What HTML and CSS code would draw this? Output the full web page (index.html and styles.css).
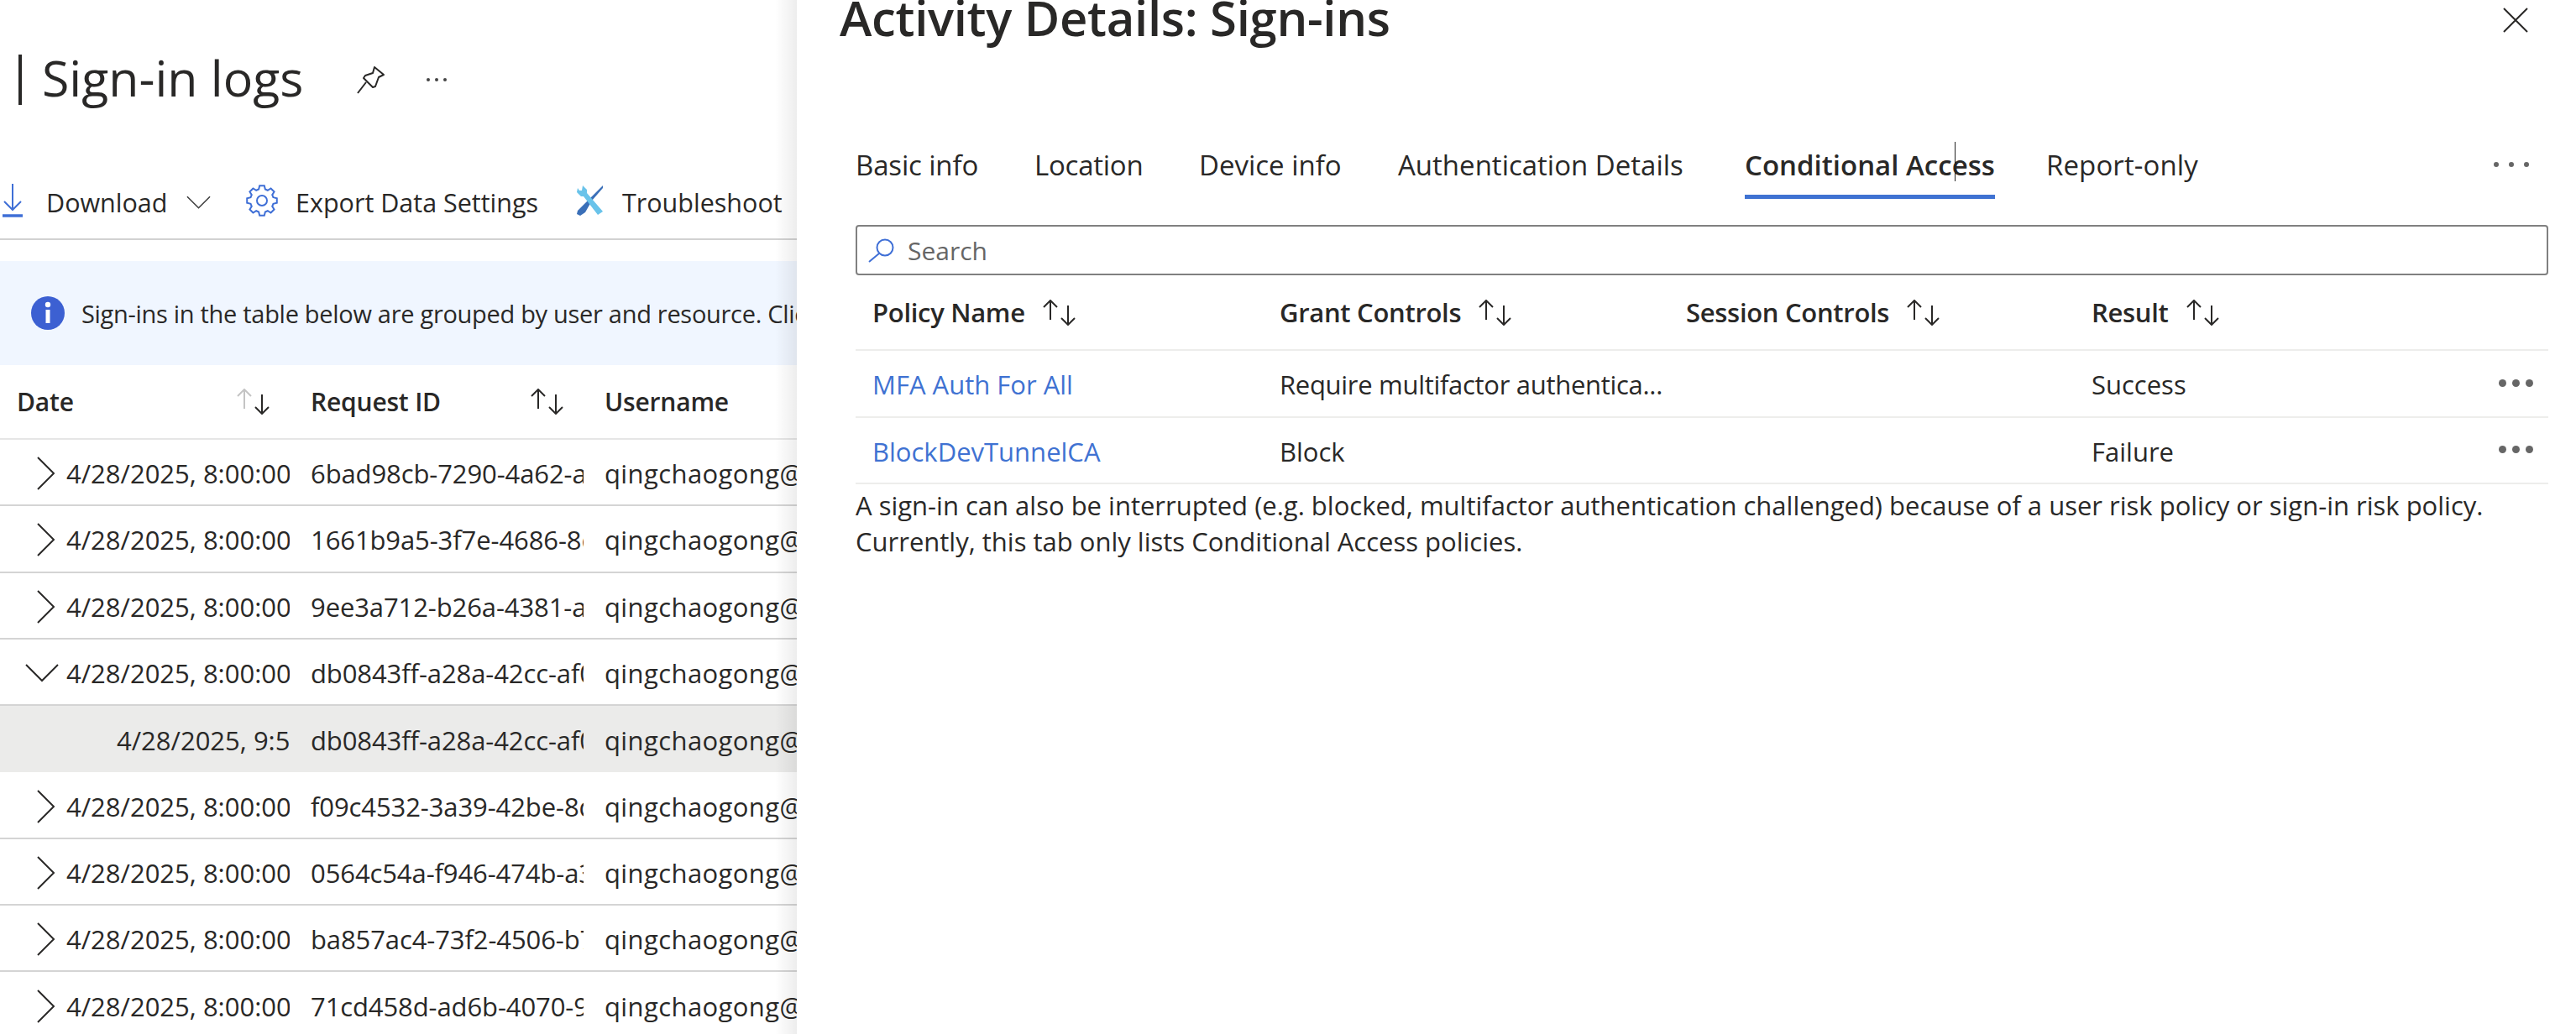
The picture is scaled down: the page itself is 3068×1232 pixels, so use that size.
FILE: index.html
```html
<!DOCTYPE html>
<html lang="en">
<head>
<meta charset="utf-8">
<title>Sign-in logs</title>
<link rel="stylesheet" href="styles.css">
</head>
<body>
<svg class="defs" width="0" height="0" aria-hidden="true">
  <symbol id="sort" viewBox="0 0 41 31"><path d="M10 1V24M2 9L10 1L18 9M31 7V30M23 22L31 30L39 22" fill="none" stroke="currentColor" stroke-width="2"/></symbol>
  <symbol id="sort-date" viewBox="0 0 41 31"><path d="M10 1V24M2 9L10 1L18 9" fill="none" stroke="#c4c4c4" stroke-width="2"/><path d="M31 7V30M23 22L31 30L39 22" fill="none" stroke="#292827" stroke-width="2"/></symbol>
  <symbol id="chev-r" viewBox="0 0 22 40"><path d="M1 1L20 20L1 39" fill="none" stroke="#292827" stroke-width="2"/></symbol>
  <symbol id="chev-d" viewBox="0 0 40 22"><path d="M1 1L20 20L39 1" fill="none" stroke="#292827" stroke-width="2"/></symbol>
</svg>
<div class="page">
  <main class="blade">
    <header class="blade-head">
      <h1 class="blade-title"><span class="title-bar"></span>Sign-in logs</h1>
      <svg class="pin" viewBox="0 0 34 34"><path d="M1 33L11 20M21 2L32 11L26 14L22 25L19 26L8 15L10 12L19 9Z" fill="none" stroke="#292827" stroke-width="2" stroke-linejoin="round"/></svg>
      <span class="head-dots"><i></i><i></i><i></i></span>
    </header>
    <div class="toolbar">
      <svg class="ic-download" viewBox="0 0 24 40"><path d="M12 0V31M2 21L12 31L22 21" fill="none" stroke="#3f6fd6" stroke-width="2"/><path d="M0 38H24" stroke="#3f6fd6" stroke-width="3.5"/></svg>
      <span class="tool-label tl-download">Download</span>
      <svg class="ic-caret" viewBox="0 0 30 16"><path d="M1 1L15 15L29 1" fill="none" stroke="#3c3c3c" stroke-width="1.6"/></svg>
      <svg class="ic-gear" viewBox="0 0 40 40"><path d="M33.46 16.14L37.78 17.18L37.78 22.82L33.46 23.86L32.24 26.79L34.56 30.58L30.58 34.56L26.79 32.24L23.86 33.46L22.82 37.78L17.18 37.78L16.14 33.46L13.21 32.24L9.42 34.56L5.44 30.58L7.76 26.79L6.54 23.86L2.22 22.82L2.22 17.18L6.54 16.14L7.76 13.21L5.44 9.42L9.42 5.44L13.21 7.76L16.14 6.54L17.18 2.22L22.82 2.22L23.86 6.54L26.79 7.76L30.58 5.44L34.56 9.42L32.24 13.21Z" fill="none" stroke="#3f6fd6" stroke-width="2"/><circle cx="20" cy="20" r="6" fill="none" stroke="#3f6fd6" stroke-width="2"/></svg>
      <span class="tool-label tl-export">Export Data Settings</span>
      <svg class="ic-wrench" viewBox="0 0 34 36"><path d="M33 0L3 30L2 34L6 36L12 32L20 18L33 3Z" fill="#3a6fb8"/><path d="M3 3L2 8L7 13L10 13L27 35L33 31L14 9L14 5L9 0L8 6L5 6Z" fill="#69c3ea"/></svg>
      <span class="tool-label tl-trouble">Troubleshoot</span>
    </div>
    <div class="banner">
      <svg class="ic-info" viewBox="0 0 40 40"><circle cx="20" cy="20" r="20" fill="#3c60d2"/><circle cx="20" cy="10" r="3.2" fill="#fff"/><rect x="17.5" y="16" width="5" height="16" fill="#fff"/></svg>
      <span class="banner-text">Sign-ins in the table below are grouped by user and resource. Click on a row to see details.</span>
    </div>
    <div class="log-table">
      <div class="log-row log-head">
        <div class="log-h h-date"><span>Date</span><svg class="sort-ic"><use href="#sort-date"/></svg></div>
        <div class="log-h h-req"><span>Request ID</span><svg class="sort-ic"><use href="#sort"/></svg></div>
        <div class="log-h h-user">Username</div>
      </div>
      <div class="log-row"><div class="c-date"><svg class="chev"><use href="#chev-r"/></svg><span>4/28/2025, 8:00:00</span></div><div class="c-req">6bad98cb-7290-4a62-a1b2</div><div class="c-user">qingchaogong@microsoft</div></div>
      <div class="log-row"><div class="c-date"><svg class="chev"><use href="#chev-r"/></svg><span>4/28/2025, 8:00:00</span></div><div class="c-req">1661b9a5-3f7e-4686-8c1d</div><div class="c-user">qingchaogong@microsoft</div></div>
      <div class="log-row"><div class="c-date"><svg class="chev"><use href="#chev-r"/></svg><span>4/28/2025, 8:00:00</span></div><div class="c-req">9ee3a712-b26a-4381-a0f4</div><div class="c-user">qingchaogong@microsoft</div></div>
      <div class="log-row"><div class="c-date"><svg class="chev-open"><use href="#chev-d"/></svg><span>4/28/2025, 8:00:00</span></div><div class="c-req">db0843ff-a28a-42cc-af01</div><div class="c-user">qingchaogong@microsoft</div></div>
      <div class="log-row sub-row"><div class="c-date c-sub"><span>4/28/2025, 9:5</span></div><div class="c-req">db0843ff-a28a-42cc-af01</div><div class="c-user">qingchaogong@microsoft</div></div>
      <div class="log-row"><div class="c-date"><svg class="chev"><use href="#chev-r"/></svg><span>4/28/2025, 8:00:00</span></div><div class="c-req">f09c4532-3a39-42be-8d21</div><div class="c-user">qingchaogong@microsoft</div></div>
      <div class="log-row"><div class="c-date"><svg class="chev"><use href="#chev-r"/></svg><span>4/28/2025, 8:00:00</span></div><div class="c-req">0564c54a-f946-474b-a3e9</div><div class="c-user">qingchaogong@microsoft</div></div>
      <div class="log-row"><div class="c-date"><svg class="chev"><use href="#chev-r"/></svg><span>4/28/2025, 8:00:00</span></div><div class="c-req">ba857ac4-73f2-4506-b7c2</div><div class="c-user">qingchaogong@microsoft</div></div>
      <div class="log-row"><div class="c-date"><svg class="chev"><use href="#chev-r"/></svg><span>4/28/2025, 8:00:00</span></div><div class="c-req">71cd458d-ad6b-4070-9e11</div><div class="c-user">qingchaogong@microsoft</div></div>
    </div>
  </main>
  <aside class="panel">
    <div class="panel-head">
      <h2 class="panel-title">Activity Details: Sign-ins</h2>
      <svg class="ic-close" viewBox="0 0 30 30"><path d="M1 1L29 29M29 1L1 29" fill="none" stroke="#292827" stroke-width="2"/></svg>
    </div>
    <nav class="tabs">
      <span class="tab t-basic">Basic info</span>
      <span class="tab t-loc">Location</span>
      <span class="tab t-dev">Device info</span>
      <span class="tab t-auth">Authentication Details</span>
      <span class="tab tab-active t-ca">Conditional Access<i class="caret"></i></span>
      <span class="tab t-rep">Report-only</span>
      <span class="tab-dots"><i></i><i></i><i></i></span>
    </nav>
    <div class="search">
      <svg class="ic-search" viewBox="0 0 31 29"><circle cx="20" cy="11" r="9.5" fill="none" stroke="#3f6fd6" stroke-width="2"/><path d="M13 18L1 28" fill="none" stroke="#3f6fd6" stroke-width="2"/></svg>
      <span class="search-text">Search</span>
    </div>
    <div class="ca-table">
      <div class="ca-row ca-head">
        <div class="ca-h"><span>Policy Name</span><svg class="sort-ic"><use href="#sort"/></svg></div>
        <div class="ca-h"><span>Grant Controls</span><svg class="sort-ic"><use href="#sort"/></svg></div>
        <div class="ca-h"><span>Session Controls</span><svg class="sort-ic"><use href="#sort"/></svg></div>
        <div class="ca-h"><span>Result</span><svg class="sort-ic"><use href="#sort"/></svg></div>
      </div>
      <div class="ca-row ca-body">
        <div class="ca-link">MFA Auth For All</div>
        <div class="ca-grant">Require multifactor authentica...</div>
        <div></div>
        <div>Success</div>
        <span class="row-dots"><i></i><i></i><i></i></span>
      </div>
      <div class="ca-row ca-body">
        <div class="ca-link">BlockDevTunnelCA</div>
        <div>Block</div>
        <div></div>
        <div>Failure</div>
        <span class="row-dots"><i></i><i></i><i></i></span>
      </div>
    </div>
    <p class="note">A sign-in can also be interrupted (e.g. blocked, multifactor authentication challenged) because of a user risk policy or sign-in risk policy.<br>Currently, this tab only lists Conditional Access policies.</p>
  </aside>
</div>
</body>
</html>
```

FILE: styles.css
```css
* { box-sizing: border-box; }
html, body { margin: 0; padding: 0; height: 100%; overflow: hidden; background: #fff; }
body {
  font-family: "Open Sans", "Noto Sans", sans-serif;
  font-size: 31px;
  color: #292827;
}
.defs { position: absolute; }
.page { display: flex; width: 3068px; height: 1232px; overflow: hidden; }

/* left blade */
.blade { width: 949px; flex: none; overflow: hidden; position: relative; }
.blade::after {
  content: ""; position: absolute; top: 0; right: 0; bottom: 0; width: 26px;
  background: linear-gradient(to right, rgba(0,0,0,0), rgba(0,0,0,.07));
}
.blade-head { display: flex; align-items: center; height: 196px; padding-bottom: 12px; }
.blade-title { display: flex; align-items: center; margin: 0 0 0 22px; font-size: 59px; font-weight: 400; line-height: 60px; }
.title-bar { width: 4px; height: 60px; background: #292827; margin-right: 24px; margin-top: 6px; }
.pin { width: 34px; height: 34px; margin-left: 64px; margin-top: 6px; }
.head-dots { display: flex; gap: 6px; margin-left: 49px; margin-top: 6px; }
.head-dots i { width: 4px; height: 4px; border-radius: 50%; background: #444; }

.toolbar { display: flex; align-items: center; height: 90px; border-bottom: 2px solid #d2d2d2; padding: 0 0 3px 3px; white-space: nowrap; }
.ic-download { width: 24px; height: 40px; }
.tool-label { font-size: 30.5px; padding-top: 4px; }
.tl-download { margin-left: 28px; width: 146px; }
.ic-caret { width: 29px; height: 16px; margin-left: 21px; margin-top: 4px; }
.ic-gear { width: 40px; height: 40px; margin-left: 41px; margin-right: -1px; }
.tl-export { margin-left: 21px; width: 290px; }
.ic-wrench { width: 34px; height: 36px; margin-left: 43px; }
.tl-trouble { margin-left: 22px; }

.banner { display: flex; align-items: center; height: 124px; margin-top: 25px; padding-left: 37px; background: #f0f6ff; white-space: nowrap; }
.ic-info { width: 40px; height: 40px; flex: none; }
.banner-text { margin-left: 20px; font-size: 29px; letter-spacing: -.3px; }

.log-row { display: grid; grid-template-columns: 345px 325px 1fr; column-gap: 25px; align-items: center; height: 79.3px; padding-top: 3px; border-bottom: 2px solid #d4d4d4; white-space: nowrap; }
.log-head { height: 89px; padding-top: 0; border-bottom-color: #e6e6e6; font-weight: 600; font-size: 30px; letter-spacing: -.2px; }
.log-h { display: flex; align-items: center; }
.h-date { padding-left: 20px; justify-content: space-between; padding-right: 23px; }
.h-req { justify-content: space-between; }
.h-req .sort-ic { margin-right: 23px; }
.sort-ic { width: 41px; height: 31px; flex: none; }
.c-date { display: flex; align-items: center; padding-left: 44px; overflow: hidden; }
.c-sub { padding-left: 139px; }
.chev { width: 22px; height: 40px; flex: none; margin-right: 13px; }
.chev-open { width: 40px; height: 22px; flex: none; margin-left: -14px; margin-right: 9px; }
.c-req { overflow: hidden; letter-spacing: -.1px; }
.c-user { overflow: hidden; letter-spacing: .4px; }
.sub-row { background: #ebebea; border-bottom: none; }

/* right panel */
.panel { flex: 1; min-width: 0; padding-left: 70px; padding-right: 33px; overflow: hidden; }
.panel-head { display: flex; justify-content: space-between; height: 0; margin-left: -19px; }
.panel-title { margin: -15px 0 0; font-size: 58px; font-weight: 600; letter-spacing: -.3px; line-height: 72px; white-space: nowrap; height: 72px; }
.ic-close { width: 30px; height: 30px; margin-top: 9px; margin-right: 24px; flex: none; }

.tabs { display: flex; align-items: center; height: 80px; margin-top: 158px; position: relative; white-space: nowrap; font-size: 33px; }
.tab { position: relative; line-height: 78px; height: 80px; }
.t-basic { width: 146px; letter-spacing: -.15px; } .t-loc { width: 129px; margin-left: 67px; letter-spacing: -.25px; }
.t-dev { width: 170px; margin-left: 67px; } .t-auth { width: 340px; margin-left: 67px; }
.t-ca { width: 298px; margin-left: 73px; font-weight: 600; }
.t-rep { margin-left: 61px; letter-spacing: .1px; }
.tab-active::after { content: ""; position: absolute; left: 0; right: 0; bottom: 1px; height: 5px; background: #3f72d2; }
.caret { position: absolute; left: 250px; top: 11px; width: 1px; height: 47px; background: #222; }
.tab-dots { display: flex; gap: 12px; margin-left: auto; margin-right: 23px; margin-top: -4px; }
.tab-dots i { width: 6px; height: 6px; border-radius: 50%; background: #666; }

.search { display: flex; align-items: center; height: 60px; margin-top: 30px; border: 2px solid #808080; border-radius: 4px; padding-left: 13px; color: #666; font-size: 30px; }
.ic-search { width: 31px; height: 29px; flex: none; }
.search-text { margin-left: 16px; }

.ca-row { display: grid; grid-template-columns: 485px 484px 483px 1fr; position: relative; align-items: center; height: 79.5px; border-bottom: 2px solid #ededeb; padding-left: 20px; white-space: nowrap; }
.ca-body { padding-top: 3px; }
.ca-head { height: 90px; font-weight: 600; letter-spacing: -.3px; }
.ca-h { display: flex; align-items: center; gap: 20px; }
.ca-link { color: #3f72d2; }
.ca-grant { letter-spacing: -.3px; }
.row-dots { position: absolute; right: 18px; top: 50%; margin-top: -5px; display: flex; gap: 7px; }
.row-dots i { width: 9px; height: 9px; border-radius: 50%; background: #666; }
.note { margin: 4px 0 0; line-height: 43px; }
```
